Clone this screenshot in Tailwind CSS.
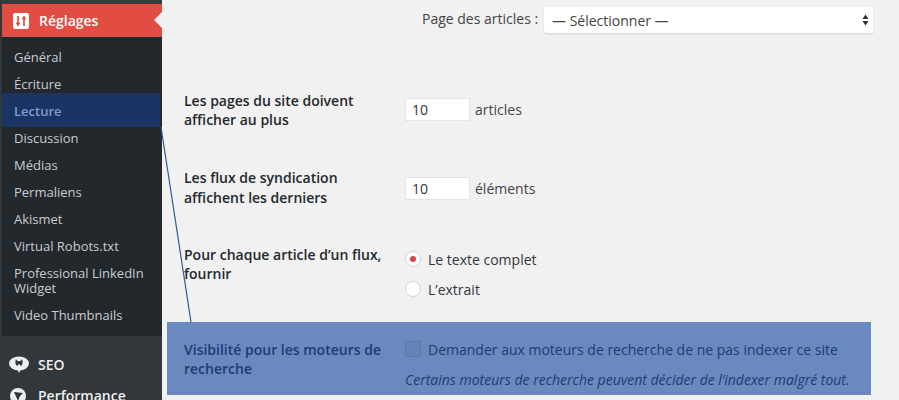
<!DOCTYPE html>
<html lang="fr">
<head>
    <meta charset="UTF-8">
    <title>Réglages de lecture</title>
    <script src="https://cdn.jsdelivr.net/npm/@tailwindcss/browser@4"></script>
</head>
<body class="bg-[#f1f1f1] font-['Open_Sans',sans-serif] text-[14px] text-[#444]">
    <div class="relative flex h-[400px] w-[899px] overflow-hidden">
        <!-- sidebar -->
        <aside class="flex h-[400px] w-[162px] shrink-0 flex-col overflow-hidden bg-[#32373c] pl-[2px] text-[#c8cbcf]">
            <div class="h-[4px] shrink-0 bg-[#3a3a3a]"></div>
            <div class="relative flex h-[33px] shrink-0 items-center bg-[#e14d43] pl-[11px] text-[14px] font-semibold text-white">
                <svg class="mr-[10px] h-[16px] w-[16px]" viewBox="0 0 16 16">
                    <rect width="16" height="16" rx="2" fill="#fff"/>
                    <path d="M5 3v10M3 10.5h4M11 3v10M9 5.5h4" stroke="#e14d43" stroke-width="1.7"/>
                </svg>
                Réglages
                <span class="absolute right-0 top-[8px] h-0 w-0 border-y-[8px] border-r-[8px] border-y-transparent border-r-[#f1f1f1]"></span>
            </div>
            <nav class="flex h-[299px] shrink-0 flex-col bg-[#23282d] pt-[6px] text-[13px] leading-[18px]">
                <a class="flex h-[27px] shrink-0 items-center pl-[12px]">Général</a>
                <a class="flex h-[27px] shrink-0 items-center pl-[12px]">Écriture</a>
                <a class="relative z-10 flex h-[27px] shrink-0 items-center pl-[12px] font-semibold text-[#7f9bd6]">Lecture</a>
                <a class="flex h-[27px] shrink-0 items-center pl-[12px]">Discussion</a>
                <a class="flex h-[27px] shrink-0 items-center pl-[12px]">Médias</a>
                <a class="flex h-[27px] shrink-0 items-center pl-[12px]">Permaliens</a>
                <a class="flex h-[27px] shrink-0 items-center pl-[12px]">Akismet</a>
                <a class="flex h-[27px] shrink-0 items-center pl-[12px]">Virtual Robots.txt</a>
                <a class="block shrink-0 pb-[5px] pl-[12px] pt-[7px] leading-[15px]">Professional LinkedIn Widget</a>
                <a class="flex h-[27px] shrink-0 items-center pl-[12px]">Video Thumbnails</a>
            </nav>
            <div class="flex flex-col pt-[13px] text-[14px] font-semibold text-[#eee]">
                <div class="flex h-[31px] shrink-0 items-center pl-[7px]">
                    <svg class="mr-[9px] h-[18px] w-[20px]" viewBox="0 0 20 18">
                        <ellipse cx="10" cy="7.5" rx="10" ry="7" fill="#eee"/>
                        <path d="M7 3C6 6 6 8 8 10L10 8L12 10C14 8 14 6 13 3C12 6 8 6 7 3z" fill="#32373c"/>
                        <path d="M8 13l2 4 2-4z" fill="#eee"/>
                    </svg>
                    SEO
                </div>
                <div class="flex h-[31px] shrink-0 items-center pl-[7px]">
                    <svg class="mr-[9px] h-[18px] w-[20px]" viewBox="0 0 20 18">
                        <circle cx="9" cy="9" r="8" fill="#eee"/>
                        <path d="M5 5l4 9 2-5 3-3z" fill="#32373c"/>
                    </svg>
                    Performance
                </div>
            </div>
        </aside>

        <!-- settings -->
        <main class="flex-1 pl-[22px]">
            <div class="flex h-[40px] items-center pl-[238px]">
                <span class="mt-[-3px] w-[122px] text-[#444]">Page des articles :</span>
                <div class="flex h-[26px] w-[329px] items-center justify-between rounded-[3px] bg-white pl-[8px] pr-[4px] shadow-[0_1px_2px_rgba(0,0,0,0.12)]">
                    <span>— Sélectionner —</span>
                    <svg class="h-[12px] w-[7px]" viewBox="0 0 7 12"><path d="M3.5 0.5L6.5 5H0.5zM3.5 11.5L0.5 7H6.5z" fill="#333"/></svg>
                </div>
            </div>

            <div class="mt-[51px] flex h-[64px] items-start">
                <div class="w-[221px] pr-[21px] font-semibold leading-[19px] text-[#23282d]">Les pages du site doivent afficher au plus</div>
                <div class="flex items-center pt-[7px]">
                    <div class="flex h-[23px] w-[65px] items-center bg-white pl-[7px] text-[#32373c] shadow-[inset_0_0_0_1px_#e4e4e4]">10</div>
                    <span class="ml-[5px]">articles</span>
                </div>
            </div>

            <div class="mt-[13px] flex h-[64px] items-start">
                <div class="w-[221px] pr-[21px] font-semibold leading-[20px] text-[#23282d]">Les flux de syndication affichent les derniers</div>
                <div class="flex items-center pt-[9px]">
                    <div class="flex h-[23px] w-[65px] items-center bg-white pl-[7px] text-[#32373c] shadow-[inset_0_0_0_1px_#e4e4e4]">10</div>
                    <span class="ml-[5px]">éléments</span>
                </div>
            </div>

            <div class="mt-[13px] flex items-start">
                <div class="w-[221px] pr-[21px] font-semibold leading-[19px] text-[#23282d]">Pour chaque article d’un flux, fournir</div>
                <div class="flex flex-col gap-[10px] pt-[4px] text-[#32373c]">
                    <label class="flex h-[20px] items-center">
                        <span class="mr-[7px] flex h-[16px] w-[16px] items-center justify-center rounded-full border border-[#d4d4d4] bg-white"><span class="h-[6px] w-[6px] rounded-full bg-[#d1444f]"></span></span>
                        Le texte complet
                    </label>
                    <label class="flex h-[20px] items-center">
                        <span class="mr-[7px] h-[16px] w-[16px] rounded-full border border-[#d4d4d4] bg-white"></span>
                        L’extrait
                    </label>
                </div>
            </div>

            <!-- highlighted row -->
            <div class="ml-[-17px] mt-[23px] flex h-[73px] w-[704px] bg-[#6a8abf] pl-[17px] pt-[18px] text-[#1f3a75]">
                <div class="w-[221px] pr-[21px] font-semibold leading-[19px]">Visibilité pour les moteurs de recherche</div>
                <div class="mt-[-1px] flex flex-col">
                    <label class="flex h-[20px] items-center">
                        <span class="mr-[7px] h-[16px] w-[16px] rounded-[2px] border border-[#5877ab] bg-[#6483b8]"></span>
                        Demander aux moteurs de recherche de ne pas indexer ce site
                    </label>
                    <p class="mt-[10px] italic">Certains moteurs de recherche peuvent décider de l’indexer malgré tout.</p>
                </div>
            </div>
        </main>

        <!-- annotation over the page -->
        <div class="absolute left-[2px] top-[93px] h-[34px] w-[158px] bg-[#1a3464]"></div>
        <svg class="absolute left-0 top-0 h-[400px] w-[899px]" viewBox="0 0 899 400">
            <path d="M161 127L191 322" stroke="#2c5a9c" stroke-width="1.2" fill="none"/>
        </svg>
    </div>
</body>
</html>
